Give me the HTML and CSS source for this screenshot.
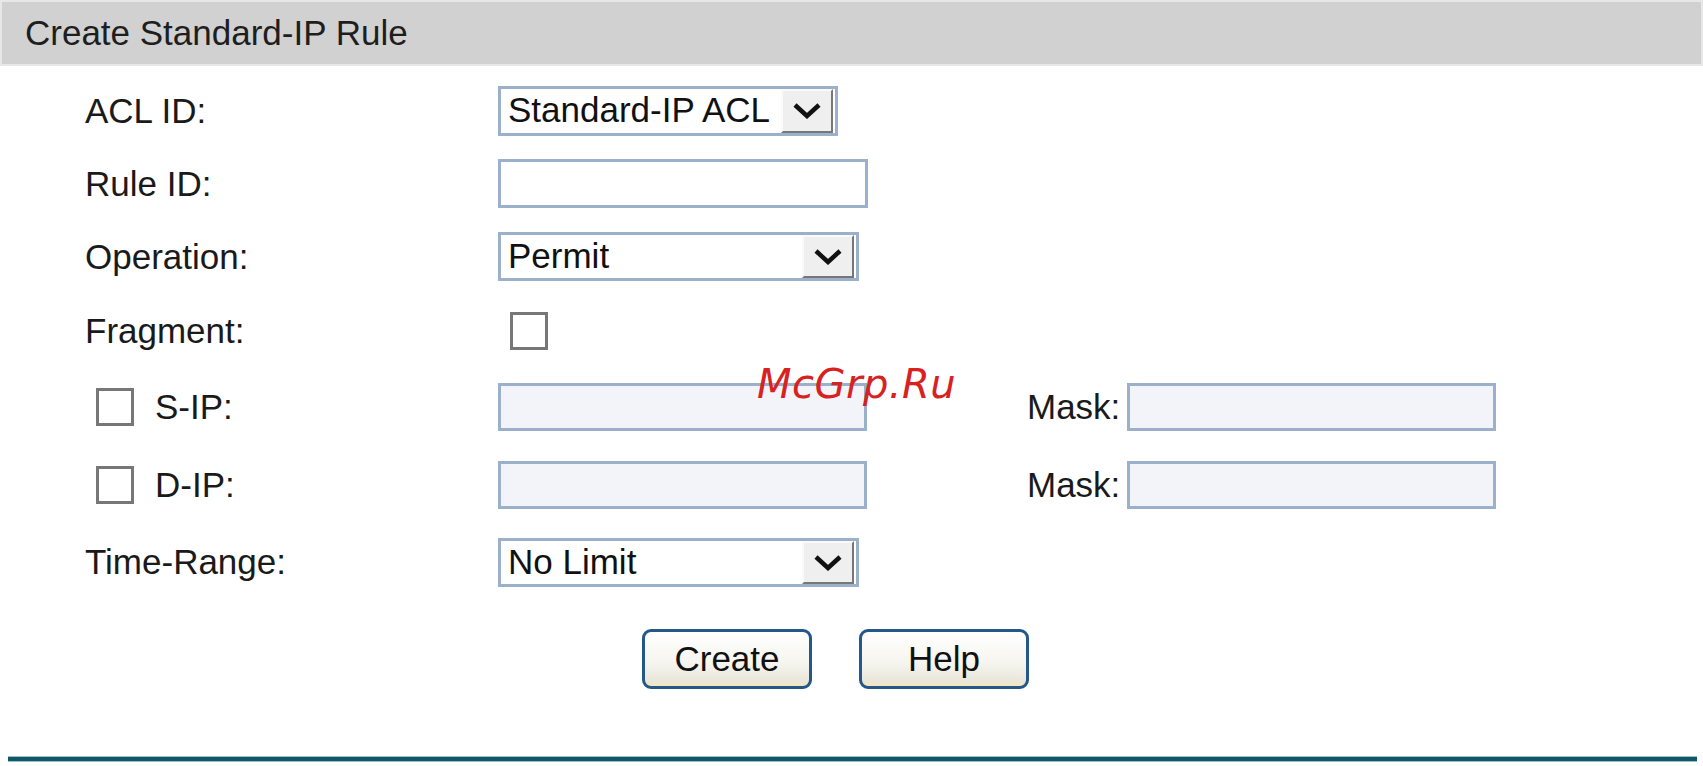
FILE: index.html
```html
<!DOCTYPE html>
<html lang="en">
<head>
	<meta charset="UTF-8">
	<title>Create Standard-IP Rule</title>
	<link rel="stylesheet" href="styles.css">
</head>
<body>
	<div class="panel">
		<!-- Title -->
		<div class="panel-title">Create Standard-IP Rule</div>

		<!-- Form -->
		<div class="form">
			<div class="row row-acl">
				<label class="lbl">ACL ID:</label>
				<div class="select sel-acl">
					<span class="val">Standard-IP ACL</span>
					<span class="arrow"><svg width="30" height="17" viewBox="0 0 30 17"><path d="M3 3 L15 14 L27 3" fill="none" stroke="#111" stroke-width="4.5"/></svg></span>
				</div>
			</div>
			<div class="row row-rule">
				<label class="lbl">Rule ID:</label>
				<input type="text" class="txt txt-rule">
			</div>
			<div class="row row-op">
				<label class="lbl">Operation:</label>
				<div class="select sel-wide">
					<span class="val">Permit</span>
					<span class="arrow"><svg width="30" height="17" viewBox="0 0 30 17"><path d="M3 3 L15 14 L27 3" fill="none" stroke="#111" stroke-width="4.5"/></svg></span>
				</div>
			</div>
			<div class="row row-frag">
				<label class="lbl">Fragment:</label>
				<span class="check frag-check"></span>
			</div>
			<div class="row row-ip">
				<label class="lbl lbl-check"><span class="check"></span>S-IP:</label>
				<input type="text" class="txt txt-off" disabled>
				<label class="mask">Mask:</label>
				<input type="text" class="txt txt-off" disabled>
			</div>
			<div class="row row-ip">
				<label class="lbl lbl-check"><span class="check"></span>D-IP:</label>
				<input type="text" class="txt txt-off" disabled>
				<label class="mask">Mask:</label>
				<input type="text" class="txt txt-off" disabled>
			</div>
			<div class="row row-time">
				<label class="lbl">Time-Range:</label>
				<div class="select sel-wide">
					<span class="val">No Limit</span>
					<span class="arrow"><svg width="30" height="17" viewBox="0 0 30 17"><path d="M3 3 L15 14 L27 3" fill="none" stroke="#111" stroke-width="4.5"/></svg></span>
				</div>
			</div>
		</div>

		<!-- Buttons -->
		<div class="actions">
			<button class="btn">Create</button>
			<button class="btn">Help</button>
		</div>

		<div class="rule-line"></div>

		<div class="watermark">McGrp.Ru</div>
	</div>
</body>
</html>
```

FILE: styles.css
```css
body {
	margin: 0;
	background: #fff;
	font-family: "Liberation Sans", Arial, sans-serif;
	font-size: 35px;
	color: #1a1a1a;
}

.panel {
	position: relative;
	width: 1703px;
	height: 766px;
}

.panel-title {
	height: 62px;
	line-height: 62px;
	padding-left: 23px;
	background: #d1d1d1;
	border: 2px solid #e7e7e7;
	color: #1e1e1e;
}

.form {
	padding: 8px 0 0 85px;
}

.row {
	display: flex;
	align-items: center;
}
.row-acl  { height: 73px; }
.row-rule { height: 73px; }
.row-op   { height: 73px; }
.row-frag { height: 75px; }
.row-ip   { height: 78px; }
.row-time { height: 76px; }

.lbl {
	flex: none;
	width: 413px;
	display: flex;
	align-items: center;
}
.lbl-check .check {
	margin: 0 21px 0 11px;
}

/* select box */
.select {
	display: flex;
	box-sizing: border-box;
	height: 50px;
	border: 3px solid #9bb1cb;
	background: #fff;
}
.sel-acl  { width: 340px; }
.sel-wide { width: 361px; height: 49px; }
.select .val {
	flex: 1;
	padding-left: 7px;
	line-height: 42px;
	color: #111;
	white-space: nowrap;
	overflow: hidden;
}
.select .arrow {
	flex: none;
	width: 48px;
	margin: 0 2px 0 0;
	display: flex;
	align-items: center;
	justify-content: center;
	background: #efefef;
	border-top: 2px solid #fafafa;
	border-left: 2px solid #fafafa;
	border-right: 2px solid #777;
	border-bottom: 2px solid #777;
}

/* text boxes */
.txt {
	box-sizing: border-box;
	width: 370px;
	height: 49px;
	margin: 0;
	border: 3px solid #9bb1cb;
	background: #fff;
	font: inherit;
}
.txt-off {
	width: 369px;
	height: 48px;
	background: #f2f4f9;
}

.mask {
	margin: 0 7px 0 160px;
}

/* checkbox */
.check {
	display: inline-block;
	box-sizing: border-box;
	width: 38px;
	height: 38px;
	border: 3px solid #777;
	background: #fff;
}
.frag-check {
	margin-left: 12px;
}

/* buttons */
.actions {
	display: flex;
	gap: 47px;
	padding: 29px 0 0 642px;
}
.btn {
	box-sizing: border-box;
	width: 170px;
	height: 60px;
	padding: 0;
	border: 3px solid #24578a;
	border-radius: 9px;
	background: linear-gradient(#fff, #f6f5f0 55%, #e6e3d6);
	box-shadow: inset 0 -7px 0 -4px #f3e6c0;
	font: inherit;
	color: #111;
}

.rule-line {
	position: absolute;
	left: 8px;
	right: 6px;
	top: 756px;
	height: 4px;
	background: #0f5867;
	border-top: 1px solid #9fc1c6;
	border-bottom: 1px solid #9fc1c6;
}

.watermark {
	position: absolute;
	left: 757px;
	top: 361px;
	font-family: "DejaVu Sans", sans-serif;
	font-style: italic;
	font-size: 40px;
	letter-spacing: 0.5px;
	color: #d82222;
}
```
